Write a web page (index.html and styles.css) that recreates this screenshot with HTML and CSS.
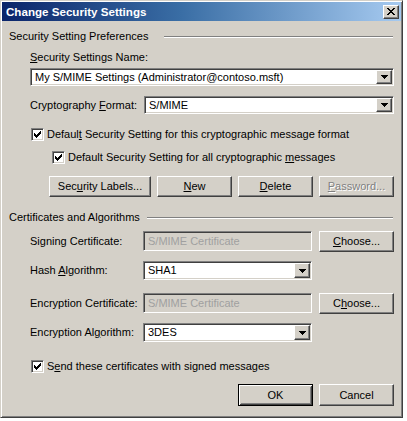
FILE: index.html
```html
<!DOCTYPE html>
<html>
<head>
<meta charset="utf-8">
<link rel="stylesheet" href="styles.css">
</head>
<body>
<div class="window">
  <div class="titlebar">
    <span class="title">Change Security Settings</span>
    <span class="close raised">
      <svg width="8" height="7" viewBox="0 0 8 7" shape-rendering="crispEdges"><path d="M0 0h2v1h-2z M6 0h2v1h-2z M1 1h2v1h-2z M5 1h2v1h-2z M2 2h4v1h-4z M3 3h2v1h-2z M2 4h4v1h-4z M1 5h2v1h-2z M5 5h2v1h-2z M0 6h2v1h-2z M6 6h2v1h-2z" fill="#000"/></svg>
    </span>
  </div>
  <div class="content">
    <div class="group-head head1"><span>Security Setting Preferences</span><span class="rule"></span></div>
    <div class="indent">
      <div class="name-label"><u>S</u>ecurity Settings Name:</div>
      <div class="combo sunken wide">
        <span class="value">My S/MIME Settings (Administrator@contoso.msft)</span>
        <span class="dd raised"><svg width="7" height="4" viewBox="0 0 7 4" shape-rendering="crispEdges"><path d="M0 0h7v1h-7z M1 1h5v1h-5z M2 2h3v1h-3z M3 3h1v1h-1z" fill="#000"/></svg></span>
      </div>
      <div class="crypto-row">
        <span class="lbl">Cryptography <u>F</u>ormat:</span>
        <div class="combo sunken">
          <span class="value">S/MIME</span>
          <span class="dd raised"><svg width="7" height="4" viewBox="0 0 7 4" shape-rendering="crispEdges"><path d="M0 0h7v1h-7z M1 1h5v1h-5z M2 2h3v1h-3z M3 3h1v1h-1z" fill="#000"/></svg></span>
        </div>
      </div>
      <div class="check check1">
        <span class="box sunken"><svg width="7" height="7" viewBox="0 0 7 7" shape-rendering="crispEdges"><path d="M0 2h1v3h-1z M1 3h1v3h-1z M2 4h1v3h-1z M3 3h1v3h-1z M4 2h1v3h-1z M5 1h1v3h-1z M6 0h1v3h-1z" fill="#000"/></svg></span>
        <span>Defaul<u>t</u> Security Setting for this cryptographic message format</span>
      </div>
      <div class="check check2">
        <span class="box sunken"><svg width="7" height="7" viewBox="0 0 7 7" shape-rendering="crispEdges"><path d="M0 2h1v3h-1z M1 3h1v3h-1z M2 4h1v3h-1z M3 3h1v3h-1z M4 2h1v3h-1z M5 1h1v3h-1z M6 0h1v3h-1z" fill="#000"/></svg></span>
        <span>Default Security Setting for all cryptographic <u>m</u>essages</span>
      </div>
      <div class="buttons">
        <span class="btn raised labels">Sec<u>u</u>rity Labels...</span>
        <span class="btn raised"><u>N</u>ew</span>
        <span class="btn raised"><u>D</u>elete</span>
        <span class="btn raised disabled"><u>P</u>assword...</span>
      </div>
    </div>
    <div class="group-head head2"><span>Certificates and Algorithms</span><span class="rule"></span></div>
    <div class="indent">
      <div class="frow r1">
        <span class="lbl">Signing Certificate:</span>
        <div class="textbox sunken disabled-field">S/MIME Certificate</div>
        <span class="btn raised"><u>C</u>hoose...</span>
      </div>
      <div class="frow r2">
        <span class="lbl">Hash <u>A</u>lgorithm:</span>
        <div class="combo sunken tall">
          <span class="value">SHA1</span>
          <span class="dd raised"><svg width="7" height="4" viewBox="0 0 7 4" shape-rendering="crispEdges"><path d="M0 0h7v1h-7z M1 1h5v1h-5z M2 2h3v1h-3z M3 3h1v1h-1z" fill="#000"/></svg></span>
        </div>
      </div>
      <div class="frow r3">
        <span class="lbl">Encryption Certificate:</span>
        <div class="textbox sunken disabled-field">S/MIME Certificate</div>
        <span class="btn raised">C<u>h</u>oose...</span>
      </div>
      <div class="frow r4">
        <span class="lbl">Encryption Al<u>g</u>orithm:</span>
        <div class="combo sunken tall">
          <span class="value">3DES</span>
          <span class="dd raised"><svg width="7" height="4" viewBox="0 0 7 4" shape-rendering="crispEdges"><path d="M0 0h7v1h-7z M1 1h5v1h-5z M2 2h3v1h-3z M3 3h1v1h-1z" fill="#000"/></svg></span>
        </div>
      </div>
      <div class="check check3">
        <span class="box sunken"><svg width="7" height="7" viewBox="0 0 7 7" shape-rendering="crispEdges"><path d="M0 2h1v3h-1z M1 3h1v3h-1z M2 4h1v3h-1z M3 3h1v3h-1z M4 2h1v3h-1z M5 1h1v3h-1z M6 0h1v3h-1z" fill="#000"/></svg></span>
        <span>S<u>e</u>nd these certificates with signed messages</span>
      </div>
    </div>
    <div class="footer">
      <span class="btn default">OK</span>
      <span class="btn raised">Cancel</span>
    </div>
  </div>
</div>
</body>
</html>
```
FILE: styles.css
```css
* { box-sizing: border-box; }
html, body { margin: 0; padding: 0; background: #fff; }
body {
  font-family: "Liberation Sans", Arial, sans-serif;
  font-size: 11px;
  line-height: 13px;
  color: #000;
}
u { text-decoration: underline; text-underline-offset: 1px; }

.window {
  width: 403px;
  height: 418px;
  background: #d4d0c8;
  border: 1px solid;
  border-color: #d4d0c8 #404040 #404040 #d4d0c8;
  box-shadow: inset 1px 1px #fff, inset -1px -1px #808080;
  padding: 1px;
  display: flex;
  flex-direction: column;
}

.titlebar {
  height: 19px;
  background: linear-gradient(to right, #0a246a 0%, #3a6ea5 45%, #a6caf0 100%);
  display: flex;
  align-items: center;
  justify-content: space-between;
  padding: 0 2px 0 4px;
}
.title { color: #fff; font-weight: bold; font-size: 11.6px; }

.raised {
  background: #d4d0c8;
  border: 1px solid;
  border-color: #fff #404040 #404040 #fff;
  box-shadow: inset -1px -1px #808080, inset 1px 1px #d4d0c8;
}
.sunken {
  border: 1px solid;
  border-color: #808080 #fff #fff #808080;
  box-shadow: inset 1px 1px #404040, inset -1px -1px #d4d0c8;
}

.close {
  width: 16px;
  height: 14px;
  display: flex;
  align-items: center;
  justify-content: center;
}

.content {
  padding: 9px 7px 0 7px;
  display: flex;
  flex-direction: column;
}

.group-head {
  display: flex;
  align-items: center;
  height: 13px;
}
.group-head .rule {
  flex: 1;
  margin-right: 1px;
  border-top: 1px solid #808080;
  border-bottom: 1px solid #fff;
  height: 2px;
}
.head1 .rule { margin-left: 16px; }
.head2 { margin-top: 14px; }
.head2 .rule { margin-left: 7px; }

.indent {
  padding-left: 21px;
  display: flex;
  flex-direction: column;
}

.name-label { margin-top: 8px; height: 13px; }

.combo {
  display: flex;
  align-items: stretch;
  background: #fff;
  height: 18px;
  padding: 1px;
}
.combo.wide { margin-top: 4px; }
.combo.tall { height: 19px; }
.combo .value {
  flex: 1;
  padding-left: 3px;
  display: flex;
  align-items: center;
}
.combo .dd {
  width: 16px;
  display: flex;
  align-items: center;
  justify-content: center;
}

.crypto-row {
  margin-top: 10px;
  display: grid;
  grid-template-columns: 114px 1fr;
  align-items: center;
}

.check {
  display: flex;
  align-items: center;
  height: 13px;
}
.check .box {
  width: 13px;
  height: 13px;
  background: #fff;
  display: flex;
  align-items: center;
  justify-content: center;
  margin-left: 1px;
  margin-right: 3px;
}
.check1 { margin-top: 14px; }
.check2 { margin-top: 10px; padding-left: 21px; }
.check3 { margin-top: 18px; }

.btn {
  height: 21px;
  width: 75px;
  display: flex;
  align-items: center;
  justify-content: center;
  background: #d4d0c8;
}
.buttons {
  margin-top: 12px;
  display: flex;
  justify-content: flex-end;
  gap: 6px;
}
.buttons .labels { width: 102px; }
.disabled {
  color: #808080;
  text-shadow: 1px 1px 0 #fff;
}
.disabled u { text-decoration-color: #808080; }

.frow {
  display: grid;
  grid-template-columns: 113px 169px 82px;
  align-items: start;
}
.frow .lbl { align-self: center; }
.frow .btn { justify-self: end; }
.r1 { margin-top: 7px; }
.r2 { margin-top: 9px; }
.r3 { margin-top: 13px; }
.r4 { margin-top: 9px; }

.textbox {
  height: 20px;
  padding: 1px 0 0 4px;
  display: flex;
  align-items: center;
}
.disabled-field {
  background: #d4d0c8;
  color: #a0a0a0;
}

.footer {
  margin-top: 11px;
  display: flex;
  justify-content: flex-end;
  gap: 6px;
}
.footer .btn { height: 22px; }
.btn.default {
  border: 1px solid #000;
  box-shadow: inset 1px 1px #fff, inset -1px -1px #404040, inset 2px 2px #d4d0c8, inset -2px -2px #808080;
}
```
